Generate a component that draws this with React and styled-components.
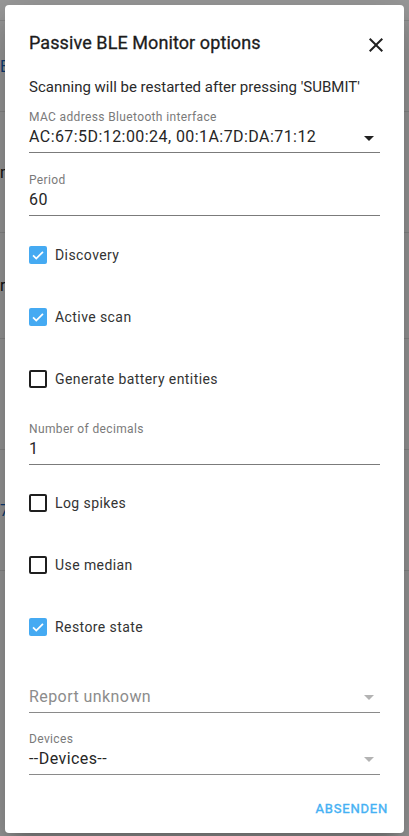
import React from 'react'
import styled, { createGlobalStyle } from 'styled-components'

const GlobalStyle = createGlobalStyle`
  html, body {
    margin: 0;
    padding: 0;
    height: 100%;
  }
  body {
    font-family: Roboto, "Noto Sans", sans-serif;
    background: #fafafa;
    overflow: hidden;
  }
`

const Page = styled.div`
  position: relative;
  width: 409px;
  height: 836px;
  overflow: hidden;
  background: #fafafa;
`

const PageRow = styled.div`
  height: ${p => p.h}px;
  border-bottom: 1px solid #e0e0e0;
  display: flex;
  align-items: center;
  font-size: 16px;
  color: ${p => p.color || '#212121'};
`

const Overlay = styled.div`
  position: absolute;
  inset: 0;
  background: rgba(0, 0, 0, 0.38);
`

const Dialog = styled.div`
  position: absolute;
  top: 5px;
  left: 5px;
  width: 399px;
  height: 828px;
  box-sizing: border-box;
  background: #fff;
  border-radius: 4px;
  box-shadow: 0 11px 15px -7px rgba(0,0,0,0.2), 0 24px 38px 3px rgba(0,0,0,0.14), 0 9px 46px 8px rgba(0,0,0,0.12);
  display: flex;
  flex-direction: column;
  padding: 22px 0 9px;
`

const Body = styled.div`
  flex: 1;
  display: flex;
  flex-direction: column;
  padding: 0 24px;
`

const Header = styled.div`
  display: flex;
  align-items: center;
  justify-content: space-between;
  height: 32px;
  padding: 0 16px 0 24px;
`

const Title = styled.h2`
  margin: 0;
  font-size: 18px;
  font-weight: 400;
  line-height: 32px;
  color: #1c1c1c;
  letter-spacing: 0.005em;
  -webkit-text-stroke: 0.3px #1c1c1c;
`

const CloseButton = styled.button`
  border: none;
  background: none;
  padding: 0;
  width: 24px;
  height: 24px;
  margin-top: 4px;
  display: flex;
  align-items: center;
  justify-content: center;
  color: #212121;
  cursor: pointer;
`

const Description = styled.p`
  margin: 18px 0 0;
  font-size: 15px;
  line-height: 20px;
  letter-spacing: 0;
  color: #2a2a2a;
`

const Field = styled.div`
  position: relative;
  margin-top: ${p => p.mt}px;
  border-bottom: 1px solid ${p => (p.disabled ? '#8a8a8a' : '#7b7b7b')};
  padding-bottom: 3px;
`

const Label = styled.div`
  font-size: 12px;
  line-height: 16px;
  height: 16px;
  color: #7a7a7a;
  letter-spacing: 0.03em;
`

const Value = styled.div`
  font-size: 16px;
  line-height: 24px;
  height: 24px;
  color: ${p => (p.placeholder ? '#8c8c8c' : '#262626')};
  letter-spacing: 0.027em;
  white-space: nowrap;
`

const Arrow = styled.span`
  position: absolute;
  right: 6px;
  bottom: ${p => p.bottom || 12}px;
  width: 0;
  height: 0;
  border-left: 5px solid transparent;
  border-right: 5px solid transparent;
  border-top: 5px solid ${p => (p.muted ? '#b3b3b3' : '#212121')};
`

const CheckRow = styled.label`
  display: flex;
  align-items: center;
  gap: 8px;
  height: 18px;
  margin-top: ${p => p.mt}px;
  font-size: 14px;
  color: #333;
  letter-spacing: 0.03em;
`

const Box = styled.span`
  width: 18px;
  height: 18px;
  box-sizing: border-box;
  border-radius: 2px;
  flex-shrink: 0;
  display: flex;
  align-items: center;
  justify-content: center;
  background: ${p => (p.checked ? '#45aaf2' : 'transparent')};
  border: ${p => (p.checked ? 'none' : '2px solid #1f1f1f')};
`

const Actions = styled.div`
  display: flex;
  justify-content: flex-end;
  padding: 0 8px;
  margin-top: 15px;
`

const TextButton = styled.button`
  border: none;
  background: none;
  height: 36px;
  padding: 0 8px;
  font-family: Roboto, sans-serif;
  font-size: 13px;
  font-weight: 400;
  letter-spacing: 0.06em;
  color: #45b1f4;
  -webkit-text-stroke: 0.4px #45b1f4;
  cursor: pointer;
`

const Checkbox = ({ checked, label, mt }) => (
  <CheckRow mt={mt}>
    <Box checked={checked}>
      {checked && (
        <svg width="14" height="14" viewBox="0 0 24 24">
          <path d="M3.5 12.5 L9 18 L20.5 6.5" fill="none" stroke="#fff" strokeWidth="3" />
        </svg>
      )}
    </Box>
    {label}
  </CheckRow>
)

const App = () => {
  return (
    <>
      <GlobalStyle />
      <Page>
        <PageRow h={20} />
        <PageRow h={90} color="#1565c0">E</PageRow>
        <PageRow h={120}>n</PageRow>
        <PageRow h={105}>r</PageRow>
        <PageRow h={110} />
        <PageRow h={120} color="#1565c0">7</PageRow>
        <Overlay />
        <Dialog>
          <Header>
            <Title>Passive BLE Monitor options</Title>
            <CloseButton>
              <svg width="24" height="24" viewBox="0 0 24 24">
                <path fill="currentColor" d="M19,6.41L17.59,5L12,10.59L6.41,5L5,6.41L10.59,12L5,17.59L6.41,19L12,13.41L17.59,19L19,17.59L13.41,12L19,6.41Z" />
              </svg>
            </CloseButton>
          </Header>
          <Body>
            <Description>Scanning will be restarted after pressing 'SUBMIT'</Description>
            <Field mt={12}>
              <Label>MAC address Bluetooth interface</Label>
              <Value>AC:67:5D:12:00:24, 00:1A:7D:DA:71:12</Value>
              <Arrow bottom={11} />
            </Field>
            <Field mt={19}>
              <Label>Period</Label>
              <Value>60</Value>
            </Field>
            <Checkbox mt={30} checked label="Discovery" />
            <Checkbox mt={44} checked label="Active scan" />
            <Checkbox mt={44} label="Generate battery entities" />
            <Field mt={33}>
              <Label>Number of decimals</Label>
              <Value>1</Value>
            </Field>
            <Checkbox mt={29} label="Log spikes" />
            <Checkbox mt={44} label="Use median" />
            <Checkbox mt={44} checked label="Restore state" />
            <Field mt={33} disabled>
              <Label />
              <Value placeholder>Report unknown</Value>
              <Arrow muted bottom={12} />
            </Field>
            <Field mt={18} disabled>
              <Label>Devices</Label>
              <Value>--Devices--</Value>
              <Arrow muted bottom={12} />
            </Field>
          </Body>
          <Actions>
            <TextButton>ABSENDEN</TextButton>
          </Actions>
        </Dialog>
      </Page>
    </>
  )
}

export default App
